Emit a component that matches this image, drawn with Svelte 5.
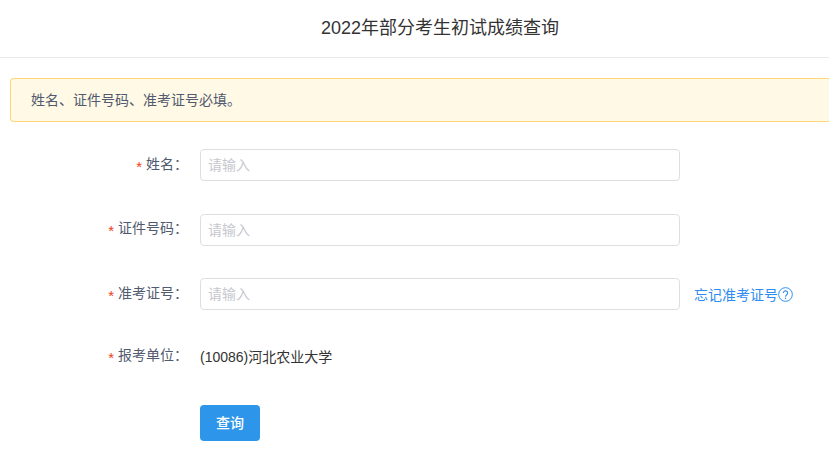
<script lang="ts">
  type Field = { label: string; name: string; hint?: string };

  const fields: Field[] = [
    { label: "姓名", name: "name" },
    { label: "证件号码", name: "id_number" },
    { label: "准考证号", name: "exam_number", hint: "忘记准考证号" },
  ];
</script>

<div class="Page">
  <header class="Page__header">2022年部分考生初试成绩查询</header>

  <main class="Page__body">
    <div class="Alert">姓名、证件号码、准考证号必填。</div>

    <form class="Form" onsubmit={(e) => e.preventDefault()}>
      {#each fields as field}
        <div class="Form__row">
          <label class="Form__label" for={field.name}>
            <span class="Form__star">*</span>{field.label}：
          </label>
          <input class="Form__input" id={field.name} type="text" placeholder="请输入" />
          {#if field.hint}
            <a class="Form__hint" href="#forgot">
              {field.hint}
              <svg viewBox="0 0 14 14" width="15" height="15" aria-hidden="true">
                <circle cx="7" cy="7" r="6.4" fill="none" stroke="currentColor" stroke-width="0.9" />
                <path
                  d="M5 5.6a2 2 0 1 1 3.2 1.6C7.4 7.8 7 8.1 7 9"
                  fill="none"
                  stroke="currentColor"
                  stroke-width="1"
                />
                <circle cx="7" cy="10.6" r="0.7" fill="currentColor" />
              </svg>
            </a>
          {/if}
        </div>
      {/each}

      <div class="Form__row Form__row--text">
        <span class="Form__label"><span class="Form__star">*</span>报考单位：</span>
        <span class="Form__value">(10086)河北农业大学</span>
      </div>

      <button class="Form__submit" type="submit">查询</button>
    </form>
  </main>
</div>

<style>
  :global(body) {
    overflow: hidden;
    background-color: #fff;
  }

  .Page {
    width: 829px;
    height: 454px;
    overflow: hidden;
    color: #515a6e;
    font-family: "Liberation Sans", "Noto Sans CJK SC", sans-serif;
    font-size: 14px;
  }

  .Page__header {
    height: 57px;
    padding-left: 51px;
    border-bottom: 1px solid #e8eaec;
    color: #333;
    font-size: 18px;
    line-height: 56px;
    text-align: center;
  }

  .Page__body {
    padding: 20px 0 0 10px;
  }

  .Alert {
    box-sizing: border-box;
    height: 44px;
    padding-left: 20px;
    border: 1px solid #ffd77a;
    border-right: none;
    border-radius: 4px 0 0 4px;
    background-color: #fff9e6;
    line-height: 43px;
  }

  .Form {
    display: flex;
    flex-direction: column;
    padding-top: 27px;
  }

  .Form__row {
    display: flex;
    align-items: center;
    height: 32px;
    margin-bottom: 32.5px;
  }

  .Form__row--text {
    height: 28px;
  }

  .Form__label {
    width: 178px;
    margin-right: 12px;
    line-height: 28px;
    text-align: right;
    white-space: nowrap;
  }

  .Form__star {
    margin-right: 4px;
    color: #ed4014;
    font-family: "Liberation Sans", sans-serif;
    font-size: 15px;
    vertical-align: -3px;
  }

  .Form__input {
    box-sizing: border-box;
    width: 480px;
    height: 32px;
    padding: 0 7px;
    border: 1px solid #dcdee2;
    border-radius: 4px;
    outline: none;
    background-color: #fff;
    color: #515a6e;
    font-family: inherit;
    font-size: 14px;
  }

  .Form__input::placeholder {
    color: #c5c8ce;
  }

  .Form__hint {
    display: flex;
    align-items: center;
    margin-left: 14px;
    color: #2d8cf0;
    text-decoration: none;
  }

  .Form__value {
    margin-top: -1px;
    color: #333;
  }

  .Form__submit {
    width: 60px;
    height: 36px;
    margin: 2px 0 0 190px;
    padding: 0 0 3px;
    border: none;
    border-radius: 4px;
    background-color: #2d96ea;
    color: #fff;
    font-family: inherit;
    font-size: 14px;
    font-weight: 500;
  }
</style>
